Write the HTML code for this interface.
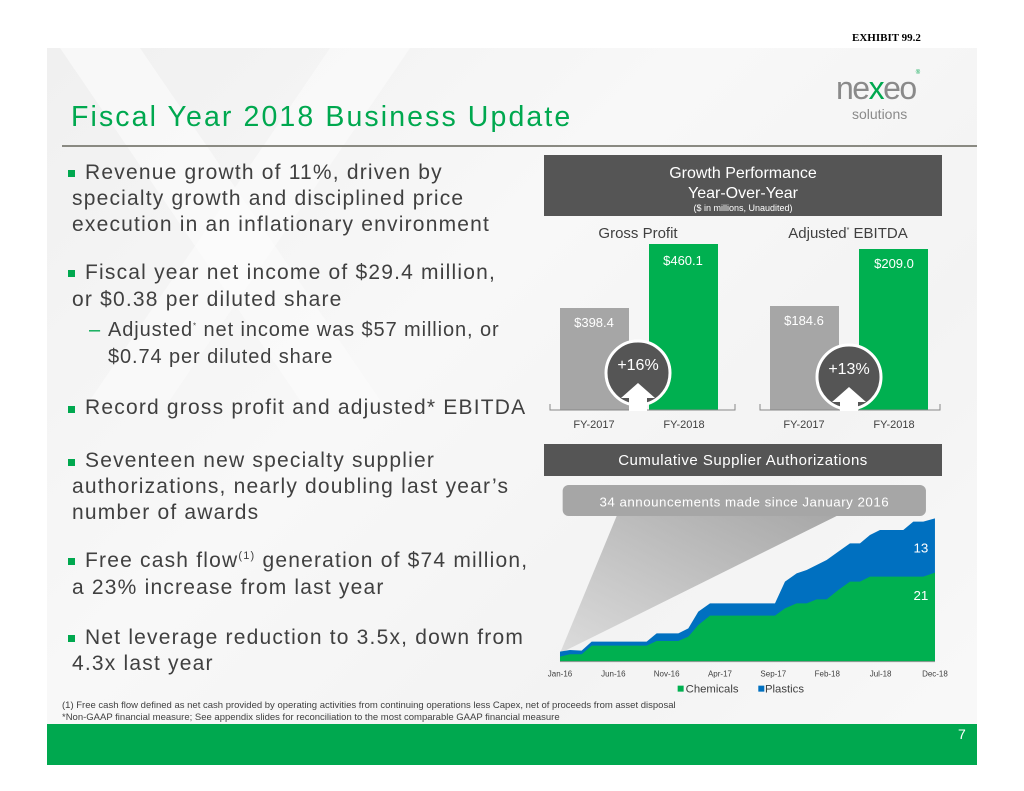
<!DOCTYPE html>
<html><head><meta charset="utf-8"><style>
body{margin:0;width:1024px;height:791px;background:#fff;position:relative;overflow:hidden;font-family:"Liberation Sans",Arial,sans-serif}
.slide{position:absolute;left:47px;top:48px;width:930px;height:717px;background:linear-gradient(135deg,#f0f0f0 0%,#f8f8f8 40%,#f3f3f3 70%,#f9f9f9 100%)}
.t{position:absolute;white-space:nowrap;color:#404040}
.b{font-size:21px;letter-spacing:1.2px}
.s{font-size:20px;letter-spacing:0.9px}
.sq{position:absolute;width:7px;height:7px;background:#00a84f}
</style></head><body>
<div class="t" style="left:852px;top:32px;font-family:'Liberation Serif',serif;font-weight:bold;font-size:11px;color:#000">EXHIBIT 99.2</div>
<div class="slide"></div>
<svg style="position:absolute;left:0;top:0" width="1024" height="791">
<polygon points="60,48 140,48 380,400 300,400" fill="#fbfbfb" opacity="0.7"/>
<polygon points="330,48 410,48 170,400 90,400" fill="#fbfbfb" opacity="0.6"/>
<line x1="62" y1="146" x2="977" y2="146" stroke="#8a8a82" stroke-width="2"/>
</svg>
<div class="t" style="left:71px;top:101px;font-size:28.5px;color:#00a84f;letter-spacing:2.1px">Fiscal Year 2018 Business Update</div>
<div class="t" style="left:836px;top:70px;font-size:32px;color:#8a8a8a;letter-spacing:-1.5px">ne<span style="color:#00a84f">x</span>eo<span style="font-size:6px;vertical-align:top;color:#00a84f">®</span></div>
<div class="t" style="left:852px;top:106px;font-size:14px;color:#8a8a8a">solutions</div>

<div class="sq" style="left:68px;top:170px"></div>
<div class="t b" style="left:85px;top:161px">Revenue growth of 11%, driven by</div>
<div class="t b" style="left:72px;top:187px">specialty growth and disciplined price</div>
<div class="t b" style="left:72px;top:213px">execution in an inflationary environment</div>
<div class="sq" style="left:68px;top:270px"></div>
<div class="t b" style="left:85px;top:261px">Fiscal year net income of $29.4 million,</div>
<div class="t b" style="left:72px;top:288px">or $0.38 per diluted share</div>
<div class="t" style="left:89px;top:319px;font-size:20px;color:#00a84f">–</div>
<div class="t s" style="left:108px;top:319px">Adjusted<sup style="font-size:8px">*</sup> net income was $57 million, or</div>
<div class="t s" style="left:108px;top:346px">$0.74 per diluted share</div>
<div class="sq" style="left:68px;top:406px"></div>
<div class="t b" style="left:85px;top:396px">Record gross profit and adjusted* EBITDA</div>
<div class="sq" style="left:68px;top:459px"></div>
<div class="t b" style="left:85px;top:449px">Seventeen new specialty supplier</div>
<div class="t b" style="left:72px;top:475px">authorizations, nearly doubling last year’s</div>
<div class="t b" style="left:72px;top:501px">number of awards</div>
<div class="sq" style="left:68px;top:558px"></div>
<div class="t b" style="left:85px;top:549px">Free cash flow<sup style="font-size:11px">(1)</sup> generation of $74 million,</div>
<div class="t b" style="left:72px;top:576px">a 23% increase from last year</div>
<div class="sq" style="left:68px;top:635px"></div>
<div class="t b" style="left:85px;top:626px">Net leverage reduction to 3.5x, down from</div>
<div class="t b" style="left:72px;top:652px">4.3x last year</div>

<svg style="position:absolute;left:0;top:0" width="1024" height="791" font-family="Liberation Sans,Arial,sans-serif">
<rect x="544" y="155" width="398" height="61" fill="#555"/>
<text x="743" y="178" font-size="16" fill="#fff" text-anchor="middle">Growth Performance</text>
<text x="743" y="198" font-size="16" fill="#fff" text-anchor="middle">Year-Over-Year</text>
<text x="743" y="211" font-size="9" fill="#fff" text-anchor="middle">($ in millions, Unaudited)</text>
<text x="638" y="238" font-size="15" fill="#404040" text-anchor="middle">Gross Profit</text>
<text x="848" y="238" font-size="15" fill="#404040" text-anchor="middle">Adjusted<tspan font-size="7" dy="-6">*</tspan><tspan dy="6"> EBITDA</tspan></text>
<rect x="560" y="308" width="69" height="102" fill="#a6a6a6"/>
<rect x="649" y="244" width="69" height="166" fill="#00b050"/>
<rect x="770" y="306" width="69" height="104" fill="#a6a6a6"/>
<rect x="859" y="249" width="69" height="161" fill="#00b050"/>
<text x="594" y="327" font-size="13" fill="#fff" text-anchor="middle">$398.4</text>
<text x="683" y="265" font-size="13" fill="#fff" text-anchor="middle">$460.1</text>
<text x="804" y="325" font-size="13" fill="#fff" text-anchor="middle">$184.6</text>
<text x="894" y="268" font-size="13" fill="#fff" text-anchor="middle">$209.0</text>
<g stroke="#888" fill="none"><path d="M550,404V410H735V404M642,410V404"/><path d="M760,404V410H940V404M848,410V404"/></g>
<circle cx="638" cy="373" r="32" fill="#555" stroke="#fff" stroke-width="3"/>
<circle cx="849" cy="377" r="32" fill="#555" stroke="#fff" stroke-width="3"/>
<polygon points="638,383 655,398 647,398 647,411 629,411 629,398 621,398" fill="#fff"/>
<polygon points="849,387 866,402 858,402 858,411 840,411 840,402 832,402" fill="#fff"/>
<text x="638" y="370" font-size="16" fill="#fff" text-anchor="middle">+16%</text>
<text x="849" y="374" font-size="16" fill="#fff" text-anchor="middle">+13%</text>
<g font-size="11" fill="#404040" text-anchor="middle"><text x="594" y="428">FY-2017</text><text x="684" y="428">FY-2018</text><text x="804" y="428">FY-2017</text><text x="894" y="428">FY-2018</text></g>

<rect x="544" y="444" width="398" height="32" fill="#555"/>
<text x="743" y="465" font-size="15" fill="#fff" text-anchor="middle" letter-spacing="0.5">Cumulative Supplier Authorizations</text>
<defs><linearGradient id="w" x1="0" y1="1" x2="1" y2="0"><stop offset="0" stop-color="#d8d8d8"/><stop offset="1" stop-color="#9a9a9a"/></linearGradient></defs>
<g transform="translate(540,440) scale(0.3333)">
<polygon points="60,640 230,228 890,228" fill="url(#w)" opacity="0.85"/>
<rect x="68" y="135" width="1090" height="93" rx="18" fill="#a6a6a6"/>
<text x="613" y="200" font-size="40" fill="#fff" text-anchor="middle" letter-spacing="1.5">34 announcements made since January 2016</text>
<polygon fill="#0070c0" points="60,665 60,635 90,630 125,632 155,605 320,605 350,580 415,580 445,565 475,515 510,490 705,490 735,425 770,400 800,390 860,360 895,335 930,310 960,310 990,285 1020,270 1090,270 1120,245 1150,245 1185,235 1185,665"/>
<polygon fill="#00b050" points="60,665 60,650 90,643 125,643 155,617 320,617 350,603 415,603 445,590 475,555 510,527 705,527 735,505 770,490 800,490 830,478 860,478 895,450 930,425 960,425 990,410 1150,410 1185,398 1185,665"/>
<line x1="60" y1="665" x2="1185" y2="665" stroke="#999" stroke-width="3"/>
<text x="1165" y="337" font-size="40" fill="#fff" text-anchor="end">13</text>
<text x="1165" y="480" font-size="40" fill="#fff" text-anchor="end">21</text>
<g font-size="24" fill="#404040" text-anchor="middle"><text x="60" y="710">Jan-16</text><text x="220" y="710">Jun-16</text><text x="380" y="710">Nov-16</text><text x="540" y="710">Apr-17</text><text x="700" y="710">Sep-17</text><text x="862" y="710">Feb-18</text><text x="1022" y="710">Jul-18</text><text x="1185" y="710">Dec-18</text></g>
<rect x="413" y="737" width="18" height="18" fill="#00b050"/><text x="437" y="757" font-size="34" fill="#404040">Chemicals</text>
<rect x="655" y="737" width="18" height="18" fill="#0070c0"/><text x="675" y="757" font-size="34" fill="#404040">Plastics</text>
</g>
</svg>
<div class="t" style="left:62px;top:700px;font-size:9.5px;color:#404040">(1) Free cash flow defined as net cash provided by operating activities from continuing operations less Capex, net of proceeds from asset disposal</div>
<div class="t" style="left:62px;top:712px;font-size:9.5px;color:#404040">*Non-GAAP financial measure; See appendix slides for reconciliation to the most comparable GAAP financial measure</div>
<div style="position:absolute;left:47px;top:724px;width:930px;height:41px;background:#00a84f"></div>
<div class="t" style="left:958px;top:726px;font-size:14px;color:#fff">7</div>
</body></html>
